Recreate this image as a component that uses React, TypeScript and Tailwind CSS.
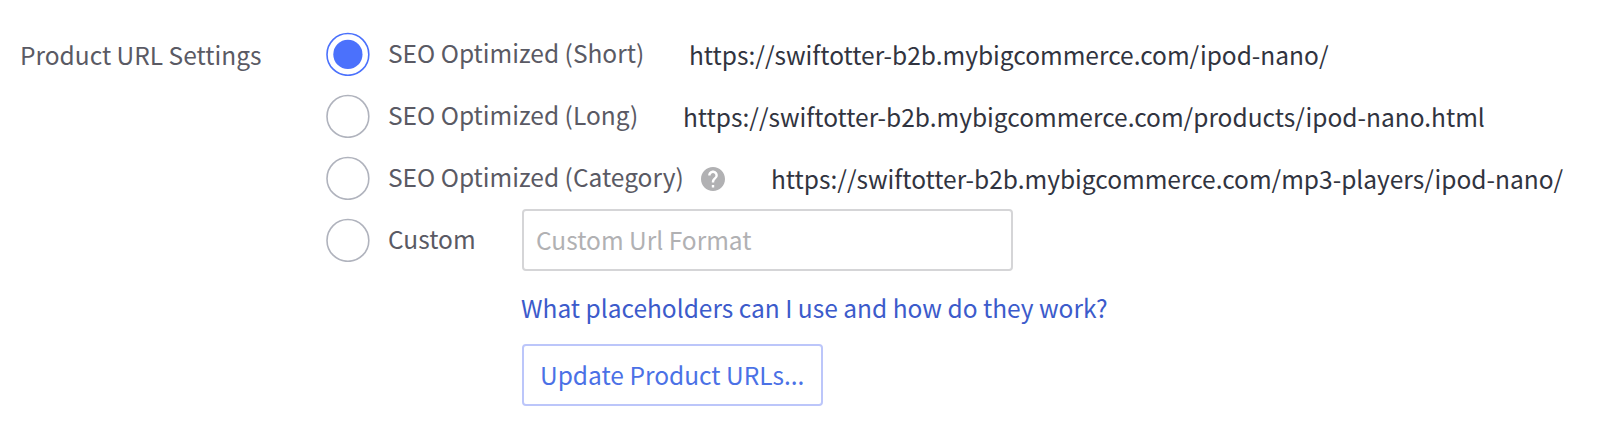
import React from 'react';

const options = [
  {
    label: 'SEO Optimized (Short)',
    url: 'https://swiftotter-b2b.mybigcommerce.com/ipod-nano/',
    labelWidth: 'w-[301px]',
    checked: true,
  },
  {
    label: 'SEO Optimized (Long)',
    url: 'https://swiftotter-b2b.mybigcommerce.com/products/ipod-nano.html',
    labelWidth: 'w-[295px]',
  },
  {
    label: 'SEO Optimized (Category)',
    url: 'https://swiftotter-b2b.mybigcommerce.com/mp3-players/ipod-nano/',
    labelWidth: 'w-[383px]',
    help: true,
  },
];

const Radio = ({ checked }: { checked?: boolean }) => (
  <svg className="mr-[18px] h-11 w-11 shrink-0" viewBox="0 0 44 44" fill="none">
    <circle cx="21.9" cy="22.4" r="20.9" stroke={checked ? '#4b71fc' : '#b0b3bd'} strokeWidth="1.6" />
    {checked && <circle cx="21.9" cy="22.4" r="14.6" fill="#4b71fc" />}
  </svg>
);

const HelpIcon = () => (
  <svg className="ml-[17px] mt-[3px] h-6 w-6 shrink-0" viewBox="2 2 20 20" fill="#b1b1b3">
    <path d="M12 2C6.48 2 2 6.48 2 12s4.48 10 10 10 10-4.48 10-10S17.52 2 12 2zm1 17h-2v-2h2v2zm2.07-7.75l-.9.92C13.45 12.9 13 13.5 13 15h-2v-.5c0-1.1.45-2.1 1.17-2.83l1.24-1.26c.37-.36.59-.86.59-1.41 0-1.1-.9-2-2-2s-2 .9-2 2H8c0-2.21 1.79-4 4-4s4 1.79 4 4c0 .88-.36 1.68-.93 2.25z" />
  </svg>
);

const App = () => {
  return (
    <div className="flex h-[424px] w-[1600px] items-start overflow-hidden whitespace-nowrap bg-white pt-8 font-['Noto_Sans_CJK_SC','Noto_Sans',sans-serif] text-[24.5px] leading-[62px] text-[#5a5a64]">
      <div className="-mt-[8px] w-[326px] shrink-0 pl-5">
        <span>Product URL Settings</span>
      </div>

      <div>
        {options.map((option) => (
          <div key={option.label} className="flex h-[62px] items-start">
            <Radio checked={option.checked} />
            <div className={`-mt-[10px] flex shrink-0 items-center ${option.labelWidth}`}>
              <span>{option.label}</span>
              {option.help && <HelpIcon />}
            </div>
            <span className="-mt-[8px] text-[#313440]">{option.url}</span>
          </div>
        ))}

        <div className="flex items-start">
          <Radio />
          <span className="-mt-[10px] w-[134px]">Custom</span>
          <div className="-mt-[9px] flex flex-col items-start">
            <input
              type="text"
              placeholder="Custom Url Format"
              className="h-[62px] w-[491px] rounded-[4px] border-2 border-[#d5d5d7] bg-white px-3 outline-none placeholder:text-[#b1b1b3]"
            />
            <a href="#" className="mt-[6px] -ml-px text-[#3c5bcb]">
              What placeholders can I use and how do they work?
            </a>
            <button className="mt-[5px] h-[62px] w-[301px] rounded-[4px] border-2 border-[#bcc6fa] px-4 text-left leading-[58px] text-[#4b71e6]">
              Update Product URLs...
            </button>
          </div>
        </div>
      </div>
    </div>
  );
};

export default App;
